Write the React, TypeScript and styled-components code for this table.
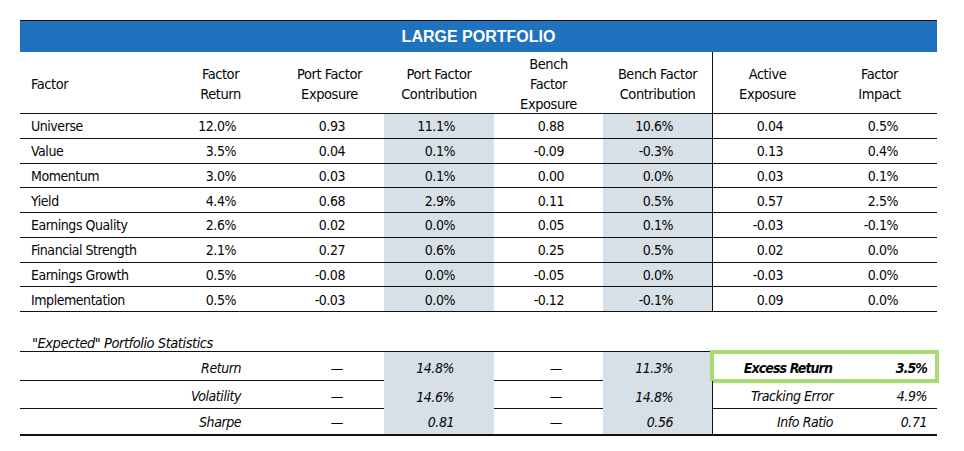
import React from 'react';
import styled, { createGlobalStyle } from 'styled-components';

const GlobalStyle = createGlobalStyle`
  body {
    margin: 0;
    background: #fff;
    font-family: "Liberation Sans Narrow", "DejaVu Sans Condensed", "Liberation Sans", sans-serif;
    font-stretch: condensed;
    letter-spacing: -0.45px;
    color: #050505;
  }
`;

const COLS = '146px 109px 109px 110px 109px 109px 110px 115px';
const SHADE = '#d8e0e7';

const Page = styled.div`
  padding: 20px;
`;

const Panel = styled.div`
  width: 917px;
`;

const TitleBar = styled.div`
  height: 32px;
  border-top: 1px solid #111;
  background: #1f72bd;
  color: #fff;
  font-family: "Liberation Sans", Arial, sans-serif;
  font-stretch: normal;
  letter-spacing: 0;
  font-weight: bold;
  font-size: 16px;
  display: flex;
  align-items: center;
  justify-content: center;
  box-sizing: border-box;
`;

const HeadRow = styled.div`
  display: grid;
  grid-template-columns: ${COLS};
  height: 62px;
  border-bottom: 1px solid #111;
  box-sizing: border-box;
`;

const HeadCell = styled.div<{ $left?: boolean; $divide?: boolean }>`
  display: flex;
  align-items: center;
  justify-content: ${(p) => (p.$left ? 'flex-start' : 'center')};
  text-align: ${(p) => (p.$left ? 'left' : 'center')};
  padding: ${(p) => (p.$left ? '2px 0 0 11px' : '2px 0 0 0')};
  font-size: 14.5px;
  line-height: 20px;
  border-left: ${(p) => (p.$divide ? '1px solid #111' : 'none')};
`;

const Row = styled.div`
  display: grid;
  grid-template-columns: ${COLS};
  height: 24.75px;
  border-bottom: 1px solid #111;
  box-sizing: border-box;
`;

const Cell = styled.div<{ $left?: boolean; $shade?: boolean; $divide?: boolean }>`
  display: flex;
  align-items: center;
  justify-content: ${(p) => (p.$left ? 'flex-start' : 'flex-end')};
  padding: ${(p) => (p.$left ? '1px 0 0 11px' : '1px 39px 0 0')};
  background: ${(p) => (p.$shade ? SHADE : 'transparent')};
  border-left: ${(p) => (p.$divide ? '1px solid #111' : 'none')};
  font-size: 14px;
  white-space: nowrap;
`;

const StatsTitle = styled.div`
  height: 40px;
  display: flex;
  align-items: flex-end;
  padding: 0 0 0 12px;
  box-sizing: border-box;
  font-style: italic;
  font-size: 14.5px;
  border-bottom: 1px solid #111;
`;

const StatsRow = styled.div<{ $last?: boolean }>`
  display: grid;
  grid-template-columns: 255px 109px 110px 109px 109px 225px;
  height: ${(p) => (p.$last ? '27px' : '28.5px')};
  border-bottom: ${(p) => (p.$last ? '2px solid #111' : 'none')};
  box-sizing: border-box;
  font-style: italic;
  font-size: 14px;
`;

const StatCell = styled.div<{ $shade?: boolean; $line?: boolean; $pad?: number; $low?: boolean }>`
  display: flex;
  align-items: center;
  justify-content: flex-end;
  padding-right: ${(p) => p.$pad ?? 39}px;
  padding-top: ${(p) => (p.$low ? '4px' : '0')};
  background: ${(p) => (p.$shade ? SHADE : 'transparent')};
  border-bottom: ${(p) => (p.$line ? '1px solid #111' : 'none')};
  box-sizing: border-box;
`;

const ActiveBox = styled.div<{ $highlight?: boolean; $line?: boolean; $low?: boolean }>`
  display: grid;
  grid-template-columns: 120px 1fr;
  align-items: center;
  padding-top: ${(p) => (p.$low ? '4px' : '0')};
  border-left: ${(p) => (p.$highlight ? 'none' : '1px solid #111')};
  border-bottom: ${(p) => (p.$line ? '1px solid #111' : 'none')};
  outline: ${(p) => (p.$highlight ? '4px solid #a9dc70' : 'none')};
  outline-offset: -2px;
  font-weight: ${(p) => (p.$highlight ? 'bold' : 'normal')};
  letter-spacing: ${(p) => (p.$highlight ? '-0.9px' : '-0.45px')};
  box-sizing: border-box;
`;

const ActiveLabel = styled.span`
  text-align: right;
`;

const ActiveValue = styled.span`
  text-align: right;
  padding-right: 10px;
`;

const factors = [
  ['Universe', '12.0%', '0.93', '11.1%', '0.88', '10.6%', '0.04', '0.5%'],
  ['Value', '3.5%', '0.04', '0.1%', '-0.09', '-0.3%', '0.13', '0.4%'],
  ['Momentum', '3.0%', '0.03', '0.1%', '0.00', '0.0%', '0.03', '0.1%'],
  ['Yield', '4.4%', '0.68', '2.9%', '0.11', '0.5%', '0.57', '2.5%'],
  ['Earnings Quality', '2.6%', '0.02', '0.0%', '0.05', '0.1%', '-0.03', '-0.1%'],
  ['Financial Strength', '2.1%', '0.27', '0.6%', '0.25', '0.5%', '0.02', '0.0%'],
  ['Earnings Growth', '0.5%', '-0.08', '0.0%', '-0.05', '0.0%', '-0.03', '0.0%'],
  ['Implementation', '0.5%', '-0.03', '0.0%', '-0.12', '-0.1%', '0.09', '0.0%'],
];

const headers: string[][] = [
  ['Factor', 'Return'],
  ['Port Factor', 'Exposure'],
  ['Port Factor', 'Contribution'],
  ['Bench', 'Factor', 'Exposure'],
  ['Bench Factor', 'Contribution'],
  ['Active', 'Exposure'],
  ['Factor', 'Impact'],
];

const stats = [
  { label: 'Return', port: '14.8%', bench: '11.3%', active: 'Excess Return', value: '3.5%' },
  { label: 'Volatility', port: '14.6%', bench: '14.8%', active: 'Tracking Error', value: '4.9%' },
  { label: 'Sharpe', port: '0.81', bench: '0.56', active: 'Info Ratio', value: '0.71' },
];

export default function App() {
  return (
    <Page>
      <GlobalStyle />
      <Panel>
        <TitleBar>LARGE PORTFOLIO</TitleBar>
        <HeadRow>
          <HeadCell $left>Factor</HeadCell>
          {headers.map((h, i) => (
            <HeadCell key={i} $divide={i === 5}>
              <div>
                {h.map((line) => (
                  <div key={line}>{line}</div>
                ))}
              </div>
            </HeadCell>
          ))}
        </HeadRow>
        {factors.map((r) => (
          <Row key={r[0]}>
            {r.map((v, i) => (
              <Cell key={i} $left={i === 0} $shade={i === 3 || i === 5} $divide={i === 6}>
                {v}
              </Cell>
            ))}
          </Row>
        ))}
        <StatsTitle>"Expected" Portfolio Statistics</StatsTitle>
        {stats.map((s, i) => {
          const last = i === stats.length - 1;
          const line = !last;
          const low = !last;
          return (
            <StatsRow key={s.label} $last={last}>
              <StatCell $line={line} $low={low} $pad={34}>{s.label}</StatCell>
              <StatCell $line={line} $low={low} $pad={41}>—</StatCell>
              <StatCell $shade $low={low} $pad={40}>{s.port}</StatCell>
              <StatCell $line={line} $low={low} $pad={41}>—</StatCell>
              <StatCell $shade $low={low} $pad={39}>{s.bench}</StatCell>
              <ActiveBox $highlight={i === 0} $line={i === 1} $low={low}>
                <ActiveLabel>{s.active}</ActiveLabel>
                <ActiveValue>{s.value}</ActiveValue>
              </ActiveBox>
            </StatsRow>
          );
        })}
      </Panel>
    </Page>
  );
}
